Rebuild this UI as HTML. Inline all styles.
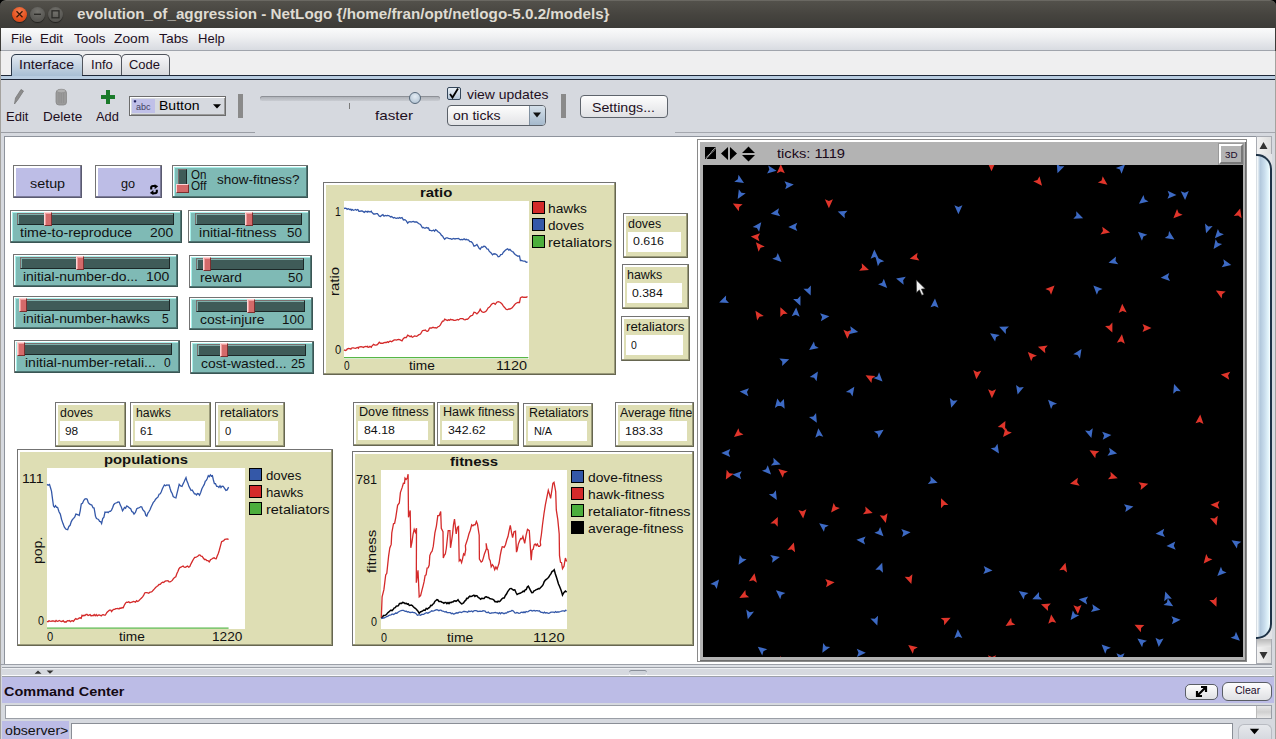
<!DOCTYPE html><html><head><meta charset="utf-8"><style>
*{margin:0;padding:0;box-sizing:border-box}
html,body{width:1276px;height:739px;overflow:hidden;background:#000;font-family:"Liberation Sans",sans-serif;color:#000}
.a{position:absolute}
.t{position:absolute;white-space:nowrap;line-height:1;transform-origin:0 0}
svg{position:absolute;overflow:visible}
</style></head><body>
<div class="a" style="left:0px;top:28px;width:1276px;height:711px;background:#d6d9df"></div>
<div class="a" style="left:0px;top:0px;width:1276px;height:28px;background:linear-gradient(#53514b,#46443f 50%,#3c3b37);border-radius:6px 6px 0 0;border-top:1px solid #6a6862"></div>
<div class="a" style="left:12.0px;top:6.5px;width:15px;height:15px;border-radius:50%;background:radial-gradient(circle at 50% 30%,#f47f52,#e3501d 60%,#c9441a);box-shadow:0 1px 1px rgba(0,0,0,.5)"></div>
<div class="a" style="left:30.0px;top:6.5px;width:15px;height:15px;border-radius:50%;background:radial-gradient(circle at 50% 30%,#73726d,#5a5955 60%,#4e4d49);box-shadow:0 1px 1px rgba(0,0,0,.5)"></div>
<div class="a" style="left:48.0px;top:6.5px;width:15px;height:15px;border-radius:50%;background:radial-gradient(circle at 50% 30%,#73726d,#5a5955 60%,#4e4d49);box-shadow:0 1px 1px rgba(0,0,0,.5)"></div>
<svg style="left:0;top:0" width="70" height="28"><path d="M16.5 11.3 L22.5 17.3 M22.5 11.3 L16.5 17.3" stroke="#3a1a0a" stroke-width="1.3"/><path d="M34 14.3 H41" stroke="#2c2b28" stroke-width="1.4"/><rect x="52" y="10.8" width="7" height="7" fill="none" stroke="#2c2b28" stroke-width="1.3"/></svg>
<div class="t" style="left:76.5px;top:5.90px;font-size:15px;color:#dfdbd2;font-weight:bold;transform:scaleX(1.0142);">evolution_of_aggression - NetLogo {/home/fran/opt/netlogo-5.0.2/models}</div>
<div class="a" style="left:0px;top:28px;width:1276px;height:23px;background:linear-gradient(#fafbfb,#eff0f2 40%,#d8dbe1);border-bottom:1px solid #a0a4ac"></div>
<div class="t" style="left:11px;top:31.80px;font-size:13px;color:#1e0f1e;transform:scaleX(1.0022);">File</div>
<div class="t" style="left:40px;top:31.80px;font-size:13px;color:#1e0f1e;transform:scaleX(1.0265);">Edit</div>
<div class="t" style="left:73.6px;top:31.80px;font-size:13px;color:#1e0f1e;transform:scaleX(1.0343);">Tools</div>
<div class="t" style="left:114.4px;top:31.80px;font-size:13px;color:#1e0f1e;transform:scaleX(1.0561);">Zoom</div>
<div class="t" style="left:159.2px;top:31.80px;font-size:13px;color:#1e0f1e;transform:scaleX(1.0667);">Tabs</div>
<div class="t" style="left:198.2px;top:31.80px;font-size:13px;color:#1e0f1e;transform:scaleX(1.0019);">Help</div>
<div class="a" style="left:0px;top:51px;width:1276px;height:25px;background:#efeff0"></div>
<div class="a" style="left:11px;top:54px;width:72px;height:22px;border:1px solid #2a3848;border-bottom:none;border-radius:5px 5px 0 0;background:linear-gradient(#e3eaf1,#c5d4e2 50%,#a8bfd5)"></div>
<div class="a" style="left:82px;top:54px;width:40px;height:22px;border:1px solid #50545c;border-bottom:none;border-radius:5px 5px 0 0;background:linear-gradient(#f7f7f9,#e6e7ea 50%,#d6d7dc)"></div>
<div class="a" style="left:121px;top:54px;width:49px;height:22px;border:1px solid #50545c;border-bottom:none;border-radius:5px 5px 0 0;background:linear-gradient(#f7f7f9,#e6e7ea 50%,#d6d7dc)"></div>
<div class="t" style="left:19px;top:58.00px;font-size:13px;color:#1e0f1e;transform:scaleX(1.0871);">Interface</div>
<div class="t" style="left:91px;top:58.00px;font-size:13px;color:#1e0f1e;transform:scaleX(1.0052);">Info</div>
<div class="t" style="left:129px;top:58.00px;font-size:13px;color:#1e0f1e;transform:scaleX(0.9970);">Code</div>
<div class="a" style="left:0px;top:75px;width:11px;height:1px;background:#1f2838"></div>
<div class="a" style="left:82px;top:75px;width:1194px;height:1px;background:#1f2838"></div>
<div class="a" style="left:0px;top:76px;width:1276px;height:3px;background:#b8cce0"></div>
<div class="a" style="left:0px;top:79px;width:1276px;height:1px;background:#1f2838"></div>
<div class="a" style="left:0px;top:80px;width:1276px;height:56px;background:#d6d9df"></div>
<div class="a" style="left:0px;top:132px;width:255px;height:1px;background:#9a9da4"></div>
<div class="a" style="left:675px;top:132px;width:601px;height:1px;background:#a4a7ae"></div>
<svg style="left:0;top:80px" width="130" height="30"><path d="M14.5 24 L15.5 18 L21 9.5 L23.5 11 L18 19.5 Z" fill="#8c8c8c" stroke="#7a7a7a" stroke-width="0.8"/><rect x="56" y="10" width="10.5" height="15" rx="3" fill="#9a9a9a" stroke="#888" stroke-width="0.8"/><ellipse cx="61.3" cy="11" rx="4.5" ry="1.8" fill="#b0b0b0" stroke="#8a8a8a" stroke-width="0.6"/><path d="M59 13 V23 M61.3 13 V23 M63.6 13 V23" stroke="#8a8a8a" stroke-width="0.6"/><path d="M101 17 H115 M108 10 V24" stroke="#1a7a2a" stroke-width="4"/></svg>
<div class="t" style="left:5.6px;top:109.90px;font-size:13px;color:#1e0f1e;transform:scaleX(0.9997);">Edit</div>
<div class="t" style="left:42.8px;top:109.90px;font-size:13px;color:#1e0f1e;transform:scaleX(1.0427);">Delete</div>
<div class="t" style="left:96.3px;top:109.90px;font-size:13px;color:#1e0f1e;transform:scaleX(0.9896);">Add</div>
<div class="a" style="left:129px;top:96px;width:97px;height:20px;background:#d6d9df;border:1px solid #6c6c6c;box-shadow:inset 1px 1px 0 #fff,inset -1px -1px 0 #9a9a9a"></div>
<div class="a" style="left:132px;top:99px;width:23px;height:14px;background:#c0c0e8"></div>
<svg style="left:132px;top:99px" width="23" height="14"><path d="M1.5 2 l1.5 -1 l1.5 1 l-1.5 2 z" fill="#1a1a5a"/><text x="4" y="11" font-family="Liberation Sans" font-size="9" fill="#404060">abc</text></svg>
<div class="t" style="left:158.6px;top:98.80px;font-size:13px;color:#000;transform:scaleX(1.0773);">Button</div>
<svg style="left:0;top:0" width="230" height="120"><path d="M213 104.2 H221 L217 108.5 Z" fill="#000"/></svg>
<div class="a" style="left:238px;top:94px;width:5px;height:24px;background:#8a8a8a"></div>
<div class="a" style="left:260px;top:96px;width:180px;height:5px;border-radius:3px;background:linear-gradient(#a9acb2,#c9ccd2);box-shadow:inset 0 1px 0 #8d9096"></div>
<div class="a" style="left:349px;top:103px;width:1px;height:6px;background:#7a7a7a"></div>
<div class="a" style="left:408.5px;top:92px;width:12px;height:12px;border-radius:50%;background:radial-gradient(circle at 50% 35%,#e4ecf4,#a9bccd);border:1px solid #56687a"></div>
<div class="t" style="left:375px;top:109.00px;font-size:13px;color:#1e0f1e;transform:scaleX(1.1687);">faster</div>
<div class="a" style="left:447px;top:87px;width:14px;height:13px;border-radius:2px;border:1px solid #34465a;background:linear-gradient(#eaf0f6,#b4c6d8)"></div>
<svg style="left:447px;top:87px" width="14" height="13"><path d="M3 7 L5.5 10.5 L11 1.5" fill="none" stroke="#000" stroke-width="1.8"/></svg>
<div class="t" style="left:466.8px;top:87.90px;font-size:13px;color:#1e0f1e;transform:scaleX(1.0724);">view updates</div>
<div class="a" style="left:447px;top:105px;width:99px;height:21px;border-radius:4px;border:1px solid #5a6068;background:linear-gradient(#fdfdfd,#e2e3e6)"></div>
<div class="a" style="left:529px;top:106px;width:16px;height:19px;border-left:1px solid #8090a0;border-radius:0 3px 3px 0;background:linear-gradient(#d5e0ea,#a5b9cc)"></div>
<svg style="left:0;top:0" width="560" height="130"><path d="M533 112.5 H541 L537 117.5 Z" fill="#111"/></svg>
<div class="t" style="left:452.7px;top:108.60px;font-size:13px;color:#1e0f1e;transform:scaleX(1.0776);">on ticks</div>
<div class="a" style="left:561px;top:94px;width:5px;height:24px;background:#8a8a8a"></div>
<div class="a" style="left:580px;top:95px;width:88px;height:23px;border-radius:4px;border:1px solid #5e646c;background:linear-gradient(#fdfdfd,#e0e1e4)"></div>
<div class="t" style="left:592px;top:100.50px;font-size:13px;color:#1e0f1e;transform:scaleX(1.0897);">Settings...</div>
<div class="a" style="left:0px;top:28px;width:1px;height:23px;background:#3c3b37"></div>
<div class="a" style="left:0px;top:51px;width:1px;height:688px;background:#a4a29e"></div>
<div class="a" style="left:1275px;top:28px;width:1px;height:23px;background:#3c3b37"></div>
<div class="a" style="left:4px;top:136px;width:1270px;height:529px;background:#fff;border:1px solid #8e939c"></div>
<div class="a" style="left:0px;top:664px;width:1276px;height:1px;background:#9ca0a8"></div>
<div class="a" style="left:2px;top:665px;width:1274px;height:2px;background:#dde0e5"></div>
<div class="a" style="left:2px;top:667px;width:1274px;height:1px;background:#9ca0a8"></div>
<div class="a" style="left:2px;top:668px;width:1274px;height:8px;background:#d6d9df;border-top:1px solid #eef0f3;border-bottom:1px solid #fafbfc"></div>
<div class="a" style="left:629px;top:670px;width:18px;height:4.5px;border-radius:3px;border-top:1.5px solid #8a909a;background:#cfd3da;box-shadow:0 1px 0 #fff"></div>
<svg style="left:0;top:0" width="60" height="680"><path d="M34.6 673.7 L38 670.4 L41.5 673.7 Z M46.6 670.4 H53.5 L50 673.7 Z" fill="#333"/></svg>
<div class="a" style="left:13px;top:165px;width:69px;height:33px;background:#bdbde6;border-top:1px solid #737373;border-left:1px solid #737373;box-shadow:inset -1px -1px 0 #5a5a70,inset -2px -2px 0 #7a7a98,inset 1px 1px 0 #fff,inset 2px 2px 0 #fff"></div>
<div class="t" style="left:29.5px;top:177.00px;font-size:13px;color:#111;transform:scaleX(1.1033);">setup</div>
<div class="a" style="left:95px;top:165px;width:67px;height:33px;background:#bdbde6;border-top:1px solid #737373;border-left:1px solid #737373;box-shadow:inset -1px -1px 0 #5a5a70,inset -2px -2px 0 #7a7a98,inset 1px 1px 0 #fff,inset 2px 2px 0 #fff"></div>
<div class="t" style="left:121px;top:177.00px;font-size:13px;color:#111;transform:scaleX(0.9745);">go</div>
<svg style="left:0;top:0" width="200" height="200"><path d="M151.2 189.6 V187.6 Q151.2 186 153 186 H155.3" fill="none" stroke="#000" stroke-width="2.1"/><path d="M154.6 184.3 L158.2 186.2 L154.6 189.2 Z" fill="#000"/><path d="M156.8 189.8 V191.6 Q156.8 193.2 155 193.2 H152.7" fill="none" stroke="#000" stroke-width="2.1"/><path d="M153.4 194.9 L149.8 193 L153.4 190 Z" fill="#000"/></svg>
<div class="a" style="left:10px;top:210px;width:172px;height:33px;background:#7fbab5;border-top:1px solid #737373;border-left:1px solid #737373;box-shadow:inset -1px -1px 0 #3a5654,inset -2px -2px 0 #4e7472,inset 1px 1px 0 #fff,inset 2px 2px 0 #a8f0ea"></div>
<div class="a" style="left:17px;top:213px;width:157px;height:12px;background:#3f5b58;border-top:1px solid #7a6e6e;border-left:1px solid #7a6e6e;border-bottom:1px solid #1c2828;border-right:1px solid #1c2828;box-shadow:inset 1px 1px 0 #7fb0ab"></div>
<div class="a" style="left:44px;top:212px;width:8px;height:14px;background:#d46a6a;border-top:1px solid #ffd4d4;border-left:1px solid #ffd4d4;border-bottom:1px solid #7a3030;border-right:1px solid #7a3030;box-shadow:inset 1px 1px 0 #f0a0a0"></div>
<div class="t" style="left:20.3px;top:226.00px;font-size:13px;color:#111;transform:scaleX(1.0943);">time-to-reproduce</div>
<div class="t" style="left:150.2px;top:226.00px;font-size:13px;color:#111;transform:scaleX(1.0644);">200</div>
<div class="a" style="left:188px;top:210px;width:122px;height:33px;background:#7fbab5;border-top:1px solid #737373;border-left:1px solid #737373;box-shadow:inset -1px -1px 0 #3a5654,inset -2px -2px 0 #4e7472,inset 1px 1px 0 #fff,inset 2px 2px 0 #a8f0ea"></div>
<div class="a" style="left:195px;top:213px;width:107px;height:12px;background:#3f5b58;border-top:1px solid #7a6e6e;border-left:1px solid #7a6e6e;border-bottom:1px solid #1c2828;border-right:1px solid #1c2828;box-shadow:inset 1px 1px 0 #7fb0ab"></div>
<div class="a" style="left:245px;top:212px;width:8px;height:14px;background:#d46a6a;border-top:1px solid #ffd4d4;border-left:1px solid #ffd4d4;border-bottom:1px solid #7a3030;border-right:1px solid #7a3030;box-shadow:inset 1px 1px 0 #f0a0a0"></div>
<div class="t" style="left:198.6px;top:226.00px;font-size:13px;color:#111;transform:scaleX(1.0832);">initial-fitness</div>
<div class="t" style="left:286.5px;top:226.00px;font-size:13px;color:#111;transform:scaleX(1.0298);">50</div>
<div class="a" style="left:13px;top:254px;width:165px;height:33px;background:#7fbab5;border-top:1px solid #737373;border-left:1px solid #737373;box-shadow:inset -1px -1px 0 #3a5654,inset -2px -2px 0 #4e7472,inset 1px 1px 0 #fff,inset 2px 2px 0 #a8f0ea"></div>
<div class="a" style="left:20px;top:257px;width:150px;height:12px;background:#3f5b58;border-top:1px solid #7a6e6e;border-left:1px solid #7a6e6e;border-bottom:1px solid #1c2828;border-right:1px solid #1c2828;box-shadow:inset 1px 1px 0 #7fb0ab"></div>
<div class="a" style="left:76px;top:256px;width:8px;height:14px;background:#d46a6a;border-top:1px solid #ffd4d4;border-left:1px solid #ffd4d4;border-bottom:1px solid #7a3030;border-right:1px solid #7a3030;box-shadow:inset 1px 1px 0 #f0a0a0"></div>
<div class="t" style="left:23.3px;top:270.00px;font-size:13px;color:#111;transform:scaleX(1.0679);">initial-number-do...</div>
<div class="t" style="left:146px;top:270.00px;font-size:13px;color:#111;transform:scaleX(1.0736);">100</div>
<div class="a" style="left:189px;top:255px;width:123px;height:33px;background:#7fbab5;border-top:1px solid #737373;border-left:1px solid #737373;box-shadow:inset -1px -1px 0 #3a5654,inset -2px -2px 0 #4e7472,inset 1px 1px 0 #fff,inset 2px 2px 0 #a8f0ea"></div>
<div class="a" style="left:196px;top:258px;width:108px;height:12px;background:#3f5b58;border-top:1px solid #7a6e6e;border-left:1px solid #7a6e6e;border-bottom:1px solid #1c2828;border-right:1px solid #1c2828;box-shadow:inset 1px 1px 0 #7fb0ab"></div>
<div class="a" style="left:203px;top:257px;width:8px;height:14px;background:#d46a6a;border-top:1px solid #ffd4d4;border-left:1px solid #ffd4d4;border-bottom:1px solid #7a3030;border-right:1px solid #7a3030;box-shadow:inset 1px 1px 0 #f0a0a0"></div>
<div class="t" style="left:199.5px;top:271.00px;font-size:13px;color:#111;transform:scaleX(1.0566);">reward</div>
<div class="t" style="left:288.4px;top:271.00px;font-size:13px;color:#111;transform:scaleX(1.0229);">50</div>
<div class="a" style="left:13px;top:296px;width:165px;height:33px;background:#7fbab5;border-top:1px solid #737373;border-left:1px solid #737373;box-shadow:inset -1px -1px 0 #3a5654,inset -2px -2px 0 #4e7472,inset 1px 1px 0 #fff,inset 2px 2px 0 #a8f0ea"></div>
<div class="a" style="left:20px;top:299px;width:150px;height:12px;background:#3f5b58;border-top:1px solid #7a6e6e;border-left:1px solid #7a6e6e;border-bottom:1px solid #1c2828;border-right:1px solid #1c2828;box-shadow:inset 1px 1px 0 #7fb0ab"></div>
<div class="a" style="left:19px;top:298px;width:8px;height:14px;background:#d46a6a;border-top:1px solid #ffd4d4;border-left:1px solid #ffd4d4;border-bottom:1px solid #7a3030;border-right:1px solid #7a3030;box-shadow:inset 1px 1px 0 #f0a0a0"></div>
<div class="t" style="left:23.3px;top:312.00px;font-size:13px;color:#111;transform:scaleX(1.0650);">initial-number-hawks</div>
<div class="t" style="left:162.3px;top:312.00px;font-size:13px;color:#111;transform:scaleX(0.9261);">5</div>
<div class="a" style="left:189px;top:297px;width:124px;height:33px;background:#7fbab5;border-top:1px solid #737373;border-left:1px solid #737373;box-shadow:inset -1px -1px 0 #3a5654,inset -2px -2px 0 #4e7472,inset 1px 1px 0 #fff,inset 2px 2px 0 #a8f0ea"></div>
<div class="a" style="left:196px;top:300px;width:109px;height:12px;background:#3f5b58;border-top:1px solid #7a6e6e;border-left:1px solid #7a6e6e;border-bottom:1px solid #1c2828;border-right:1px solid #1c2828;box-shadow:inset 1px 1px 0 #7fb0ab"></div>
<div class="a" style="left:247px;top:299px;width:8px;height:14px;background:#d46a6a;border-top:1px solid #ffd4d4;border-left:1px solid #ffd4d4;border-bottom:1px solid #7a3030;border-right:1px solid #7a3030;box-shadow:inset 1px 1px 0 #f0a0a0"></div>
<div class="t" style="left:199.5px;top:313.00px;font-size:13px;color:#111;transform:scaleX(1.0753);">cost-injure</div>
<div class="t" style="left:281.7px;top:313.00px;font-size:13px;color:#111;transform:scaleX(1.0367);">100</div>
<div class="a" style="left:14px;top:340px;width:166px;height:33px;background:#7fbab5;border-top:1px solid #737373;border-left:1px solid #737373;box-shadow:inset -1px -1px 0 #3a5654,inset -2px -2px 0 #4e7472,inset 1px 1px 0 #fff,inset 2px 2px 0 #a8f0ea"></div>
<div class="a" style="left:17px;top:343px;width:155px;height:12px;background:#3f5b58;border-top:1px solid #7a6e6e;border-left:1px solid #7a6e6e;border-bottom:1px solid #1c2828;border-right:1px solid #1c2828;box-shadow:inset 1px 1px 0 #7fb0ab"></div>
<div class="a" style="left:17px;top:342px;width:8px;height:14px;background:#d46a6a;border-top:1px solid #ffd4d4;border-left:1px solid #ffd4d4;border-bottom:1px solid #7a3030;border-right:1px solid #7a3030;box-shadow:inset 1px 1px 0 #f0a0a0"></div>
<div class="t" style="left:24.5px;top:356.00px;font-size:13px;color:#111;transform:scaleX(1.0766);">initial-number-retali...</div>
<div class="t" style="left:164.4px;top:356.00px;font-size:13px;color:#111;transform:scaleX(0.9261);">0</div>
<div class="a" style="left:190px;top:341px;width:124px;height:33px;background:#7fbab5;border-top:1px solid #737373;border-left:1px solid #737373;box-shadow:inset -1px -1px 0 #3a5654,inset -2px -2px 0 #4e7472,inset 1px 1px 0 #fff,inset 2px 2px 0 #a8f0ea"></div>
<div class="a" style="left:197px;top:344px;width:109px;height:12px;background:#3f5b58;border-top:1px solid #7a6e6e;border-left:1px solid #7a6e6e;border-bottom:1px solid #1c2828;border-right:1px solid #1c2828;box-shadow:inset 1px 1px 0 #7fb0ab"></div>
<div class="a" style="left:220px;top:343px;width:8px;height:14px;background:#d46a6a;border-top:1px solid #ffd4d4;border-left:1px solid #ffd4d4;border-bottom:1px solid #7a3030;border-right:1px solid #7a3030;box-shadow:inset 1px 1px 0 #f0a0a0"></div>
<div class="t" style="left:200.8px;top:357.00px;font-size:13px;color:#111;transform:scaleX(1.0673);">cost-wasted...</div>
<div class="t" style="left:290.8px;top:357.00px;font-size:13px;color:#111;transform:scaleX(0.9814);">25</div>
<div class="a" style="left:172px;top:165px;width:136px;height:33px;background:#7fbab5;border-top:1px solid #737373;border-left:1px solid #737373;box-shadow:inset -1px -1px 0 #3a5654,inset -2px -2px 0 #4e7472,inset 1px 1px 0 #fff,inset 2px 2px 0 #a8f0ea"></div>
<div class="a" style="left:178px;top:169px;width:9px;height:23px;background:#3f5b58;border-top:1px solid #7a6e6e;border-left:1px solid #7a6e6e;border-bottom:1px solid #1c2828;border-right:1px solid #1c2828"></div>
<div class="a" style="left:176px;top:184px;width:13px;height:9px;background:#d46a6a;border-top:1px solid #ffd4d4;border-left:1px solid #ffd4d4;border-bottom:1px solid #7a3030;border-right:1px solid #7a3030"></div>
<div class="t" style="left:190.9px;top:168.54px;font-size:12px;color:#111;transform:scaleX(0.9625);">On</div>
<div class="t" style="left:190.9px;top:180.34px;font-size:12px;color:#111;transform:scaleX(0.9768);">Off</div>
<div class="t" style="left:216.6px;top:172.70px;font-size:13px;color:#111;transform:scaleX(1.0377);">show-fitness?</div>
<div class="a" style="left:623px;top:213px;width:65px;height:45px;background:#dedeb4;border-top:1px solid #737373;border-left:1px solid #737373;box-shadow:inset -1px -1px 0 #666650,inset -2px -2px 0 #9b9b7a,inset 1px 1px 0 #fff,inset 2px 2px 0 #fff"></div>
<div class="a" style="left:628px;top:232px;width:53px;height:19.5px;background:#fff"></div>
<div class="t" style="left:628.4px;top:217.54px;font-size:12px;color:#111;transform:scaleX(1.0339);">doves</div>
<div class="t" style="left:633.4px;top:236.13px;font-size:11.3px;color:#111;transform:scaleX(1.0967);">0.616</div>
<div class="a" style="left:622px;top:264px;width:67px;height:45px;background:#dedeb4;border-top:1px solid #737373;border-left:1px solid #737373;box-shadow:inset -1px -1px 0 #666650,inset -2px -2px 0 #9b9b7a,inset 1px 1px 0 #fff,inset 2px 2px 0 #fff"></div>
<div class="a" style="left:627px;top:283px;width:55px;height:19.5px;background:#fff"></div>
<div class="t" style="left:627px;top:269.34px;font-size:12px;color:#111;transform:scaleX(1.0348);">hawks</div>
<div class="t" style="left:632.3px;top:287.63px;font-size:11.3px;color:#111;transform:scaleX(1.0861);">0.384</div>
<div class="a" style="left:621px;top:316px;width:69px;height:45px;background:#dedeb4;border-top:1px solid #737373;border-left:1px solid #737373;box-shadow:inset -1px -1px 0 #666650,inset -2px -2px 0 #9b9b7a,inset 1px 1px 0 #fff,inset 2px 2px 0 #fff"></div>
<div class="a" style="left:626px;top:335px;width:57px;height:19.5px;background:#fff"></div>
<div class="t" style="left:626.3px;top:321.24px;font-size:12px;color:#111;transform:scaleX(1.1084);">retaliators</div>
<div class="t" style="left:631.2px;top:339.63px;font-size:11.3px;color:#111;transform:scaleX(0.9234);">0</div>
<div class="a" style="left:55px;top:402px;width:71px;height:45px;background:#dedeb4;border-top:1px solid #737373;border-left:1px solid #737373;box-shadow:inset -1px -1px 0 #666650,inset -2px -2px 0 #9b9b7a,inset 1px 1px 0 #fff,inset 2px 2px 0 #fff"></div>
<div class="a" style="left:60px;top:421px;width:59px;height:20px;background:#fff"></div>
<div class="t" style="left:60.3px;top:406.54px;font-size:12px;color:#111;transform:scaleX(1.0307);">doves</div>
<div class="t" style="left:65.4px;top:425.93px;font-size:11.3px;color:#111;transform:scaleX(1.0507);">98</div>
<div class="a" style="left:130px;top:402px;width:81px;height:45px;background:#dedeb4;border-top:1px solid #737373;border-left:1px solid #737373;box-shadow:inset -1px -1px 0 #666650,inset -2px -2px 0 #9b9b7a,inset 1px 1px 0 #fff,inset 2px 2px 0 #fff"></div>
<div class="a" style="left:135px;top:421px;width:70px;height:20px;background:#fff"></div>
<div class="t" style="left:135.6px;top:406.54px;font-size:12px;color:#111;transform:scaleX(1.0231);">hawks</div>
<div class="t" style="left:140.3px;top:425.93px;font-size:11.3px;color:#111;transform:scaleX(1.0189);">61</div>
<div class="a" style="left:215px;top:402px;width:70px;height:45px;background:#dedeb4;border-top:1px solid #737373;border-left:1px solid #737373;box-shadow:inset -1px -1px 0 #666650,inset -2px -2px 0 #9b9b7a,inset 1px 1px 0 #fff,inset 2px 2px 0 #fff"></div>
<div class="a" style="left:220px;top:421px;width:58px;height:20px;background:#fff"></div>
<div class="t" style="left:220.2px;top:406.54px;font-size:12px;color:#111;transform:scaleX(1.1065);">retaliators</div>
<div class="t" style="left:225.3px;top:425.93px;font-size:11.3px;color:#111;transform:scaleX(0.9871);">0</div>
<div class="a" style="left:353px;top:402px;width:82px;height:44px;background:#dedeb4;border-top:1px solid #737373;border-left:1px solid #737373;box-shadow:inset -1px -1px 0 #666650,inset -2px -2px 0 #9b9b7a,inset 1px 1px 0 #fff,inset 2px 2px 0 #fff"></div>
<div class="a" style="left:358px;top:420.5px;width:70px;height:19.5px;background:#fff"></div>
<div class="t" style="left:358.8px;top:406.34px;font-size:12px;color:#111;transform:scaleX(1.0528);">Dove fitness</div>
<div class="t" style="left:363.7px;top:424.93px;font-size:11.3px;color:#111;transform:scaleX(1.0932);">84.18</div>
<div class="a" style="left:437px;top:402px;width:82px;height:44px;background:#dedeb4;border-top:1px solid #737373;border-left:1px solid #737373;box-shadow:inset -1px -1px 0 #666650,inset -2px -2px 0 #9b9b7a,inset 1px 1px 0 #fff,inset 2px 2px 0 #fff"></div>
<div class="a" style="left:442px;top:420.5px;width:71px;height:19.5px;background:#fff"></div>
<div class="t" style="left:442.6px;top:406.34px;font-size:12px;color:#111;transform:scaleX(1.0512);">Hawk fitness</div>
<div class="t" style="left:447.9px;top:424.93px;font-size:11.3px;color:#111;transform:scaleX(1.0884);">342.62</div>
<div class="a" style="left:523px;top:403px;width:70px;height:44px;background:#dedeb4;border-top:1px solid #737373;border-left:1px solid #737373;box-shadow:inset -1px -1px 0 #666650,inset -2px -2px 0 #9b9b7a,inset 1px 1px 0 #fff,inset 2px 2px 0 #fff"></div>
<div class="a" style="left:528px;top:421px;width:59px;height:20px;background:#fff"></div>
<div class="t" style="left:528.6px;top:407.24px;font-size:12px;color:#111;transform:scaleX(1.0356);">Retaliators</div>
<div class="t" style="left:533.7px;top:426.03px;font-size:11.3px;color:#111;transform:scaleX(0.9613);">N/A</div>
<div class="a" style="left:615px;top:402px;width:79px;height:45px;background:#dedeb4;border-top:1px solid #737373;border-left:1px solid #737373;box-shadow:inset -1px -1px 0 #666650,inset -2px -2px 0 #9b9b7a,inset 1px 1px 0 #fff,inset 2px 2px 0 #fff"></div>
<div class="a" style="left:620px;top:421px;width:67px;height:20px;background:#fff"></div>
<div class="a" style="left:618px;top:404px;width:74px;height:16px;overflow:hidden">
<div class="t" style="left:2px;top:3.44px;font-size:12px;color:#111;transform:scaleX(1.0246);">Average fitness</div>
</div>
<div class="t" style="left:625.4px;top:426.03px;font-size:11.3px;color:#111;transform:scaleX(1.1000);">183.33</div>
<div class="a" style="left:323px;top:182px;width:293px;height:193px;background:#dedeb4;border-top:1px solid #737373;border-left:1px solid #737373;box-shadow:inset -1px -1px 0 #666650,inset -2px -2px 0 #9b9b7a,inset 1px 1px 0 #fff,inset 2px 2px 0 #fff"></div>
<div class="a" style="left:344px;top:201px;width:184.5px;height:157.5px;background:#fff"></div>
<div class="t" style="left:419.7px;top:185.57px;font-size:13.5px;color:#111;font-weight:bold;transform:scaleX(1.1037);">ratio</div>
<div class="t" style="left:334.5px;top:205.00px;font-size:13px;color:#111;transform:scaleX(0.8017);">1</div>
<div class="t" style="left:335px;top:343.30px;font-size:13px;color:#111;transform:scaleX(0.8570);">0</div>
<div class="t" style="left:344.1px;top:359.20px;font-size:13px;color:#111;transform:scaleX(0.7741);">0</div>
<div class="t" style="left:409.1px;top:359.20px;font-size:13px;color:#111;transform:scaleX(1.0545);">time</div>
<div class="t" style="left:496px;top:359.20px;font-size:13px;color:#111;transform:scaleX(1.1084);">1120</div>
<div class="t" style="left:328.3px;top:296px;font-size:13px;color:#111;transform:rotate(-90deg) scaleX(1.15);transform-origin:0 0">ratio</div>
<div class="a" style="left:532px;top:201px;width:13px;height:13px;background:#d42a2a;border:1px solid #000"></div>
<div class="t" style="left:548px;top:202.14px;font-size:13.3px;color:#111;transform:scaleX(1.0344);">hawks</div>
<div class="a" style="left:532px;top:218px;width:13px;height:13px;background:#3458a8;border:1px solid #000"></div>
<div class="t" style="left:548px;top:219.14px;font-size:13.3px;color:#111;transform:scaleX(1.0145);">doves</div>
<div class="a" style="left:532px;top:235px;width:13px;height:13px;background:#4cae3c;border:1px solid #000"></div>
<div class="t" style="left:548px;top:236.14px;font-size:13.3px;color:#111;transform:scaleX(1.0969);">retaliators</div>
<svg style="left:0;top:0" width="1276" height="739"><polyline points="344.0,208.5 345.3,208.2 346.6,208.5 347.1,209.3 348.4,208.7 349.6,209.5 350.9,209.3 351.4,210.2 352.4,209.5 353.4,210.3 354.4,210.0 355.5,209.5 356.5,210.2 357.5,209.5 358.5,210.2 358.9,211.4 360.0,211.4 361.0,210.9 362.1,211.0 363.2,211.6 364.3,212.4 365.4,211.3 366.4,211.6 367.5,212.1 367.5,211.4 368.8,211.5 370.0,212.0 371.3,211.2 371.7,212.1 373.6,214.0 374.9,214.0 376.1,213.6 377.4,213.7 379.3,216.1 380.5,216.5 381.7,215.3 382.9,214.7 384.0,216.2 385.2,215.4 386.4,215.9 387.4,215.5 388.5,215.6 389.5,216.0 390.6,217.0 391.6,216.6 393.5,218.0 394.5,217.5 395.5,218.2 396.5,218.3 397.6,217.9 398.6,218.2 399.6,217.5 400.6,218.2 402.0,217.5 403.4,219.9 404.9,219.6 406.3,220.8 407.7,223.2 408.9,221.9 410.1,221.6 411.2,222.0 412.3,221.6 413.4,221.5 414.5,222.0 415.6,221.9 416.7,222.0 418.6,223.5 420.5,224.4 422.4,227.7 423.4,227.4 424.4,228.2 425.4,228.1 426.5,227.4 427.5,228.0 428.5,227.9 429.5,230.3 430.5,230.3 431.5,230.9 432.5,230.7 433.6,230.0 434.6,231.1 435.6,229.7 436.6,230.3 438.0,231.7 439.2,232.5 440.4,233.6 441.5,235.4 442.5,235.9 443.6,237.9 444.7,239.3 446.1,237.9 447.5,237.9 448.5,238.3 449.6,238.7 450.6,238.6 451.7,239.2 452.7,238.8 453.8,238.4 455.0,239.0 456.1,238.7 457.3,238.6 458.4,238.4 460.3,239.8 461.6,239.4 462.8,239.7 464.1,238.8 465.2,239.8 466.2,239.3 467.3,239.8 468.4,239.8 469.8,241.7 471.2,241.7 472.6,243.1 474.0,246.2 475.4,245.7 476.9,244.5 478.0,246.3 479.1,248.4 480.2,249.2 481.6,246.9 482.7,247.2 483.8,246.2 484.9,246.4 486.0,247.4 487.0,249.0 488.1,249.2 489.2,251.1 490.3,252.3 491.4,253.1 492.5,254.9 493.9,253.8 495.3,254.0 496.8,254.7 498.2,256.8 499.5,256.5 500.7,254.7 502.0,254.5 503.4,252.2 504.8,250.7 506.2,249.6 507.7,248.8 508.8,250.1 509.9,249.4 511.1,250.7 512.2,251.5 513.3,252.1 514.4,253.8 515.5,254.8 516.6,255.4 518.0,256.2 519.5,255.9 520.4,260.6 521.5,260.4 522.7,260.8 523.8,261.1 525.0,261.2 526.3,262.3 527.5,262.0" fill="none" stroke="#3458a8" stroke-width="1.3" stroke-linejoin="miter"/></svg>
<svg style="left:0;top:0" width="1276" height="739"><polyline points="344.0,349.9 345.3,350.6 346.6,349.9 347.1,349.1 348.4,348.5 349.6,348.6 350.9,349.1 351.4,348.2 352.4,347.8 353.4,347.8 354.4,348.2 355.5,348.3 356.5,347.8 357.5,347.4 358.5,348.2 358.9,347.0 360.0,346.8 361.0,346.6 362.1,346.8 363.2,347.4 364.3,346.9 365.4,346.5 366.4,346.6 367.5,346.3 367.5,347.0 368.8,347.3 370.0,346.4 371.3,347.2 371.7,346.3 373.6,344.4 374.9,345.1 376.1,345.0 377.4,344.7 379.3,342.3 380.5,343.3 381.7,343.1 382.9,343.4 384.0,342.6 385.2,342.5 386.4,342.5 387.4,341.7 388.5,342.4 389.5,341.4 390.6,341.2 391.6,341.8 393.5,340.4 394.5,339.9 395.5,339.8 396.5,340.1 397.6,339.6 398.6,339.5 399.6,339.7 400.6,340.2 402.0,340.9 403.4,338.5 404.9,337.4 406.3,337.6 407.7,335.2 408.9,335.8 410.1,336.8 411.2,336.0 412.3,337.3 413.4,336.8 414.5,336.0 415.6,336.1 416.7,336.4 418.6,334.9 420.5,334.0 422.4,330.7 423.4,330.4 424.4,330.4 425.4,330.0 426.5,331.1 427.5,331.3 428.5,330.5 429.5,328.1 430.5,328.0 431.5,328.1 432.5,327.4 433.6,327.5 434.6,327.8 435.6,327.7 436.6,328.1 438.0,326.7 439.2,326.3 440.4,324.8 441.5,322.8 442.5,321.2 443.6,321.2 444.7,319.1 446.1,319.8 447.5,320.5 448.5,319.8 449.6,320.2 450.6,319.2 451.7,319.8 452.7,319.6 453.8,320.4 455.0,320.3 456.1,320.2 457.3,319.5 458.4,320.0 460.3,318.6 461.6,318.7 462.8,318.7 464.1,319.6 465.2,319.8 466.2,319.2 467.3,319.3 468.4,318.6 469.8,316.7 471.2,315.7 472.6,315.3 474.0,312.2 475.4,312.6 476.9,313.9 478.0,312.8 479.1,311.5 480.2,309.2 481.6,311.5 482.7,312.2 483.8,312.3 484.9,312.0 486.0,311.3 487.0,310.0 488.1,308.0 489.2,307.3 490.3,306.1 491.4,304.5 492.5,303.5 493.9,303.2 495.3,304.4 496.8,302.2 498.2,301.6 499.5,302.0 500.7,302.7 502.0,303.9 503.4,306.1 504.8,307.7 506.2,309.4 507.7,309.6 508.8,308.9 509.9,309.0 511.1,308.4 512.2,307.7 513.3,306.3 514.4,305.0 515.5,303.7 516.6,303.0 518.0,302.3 519.5,302.5 520.4,297.8 521.5,297.1 522.7,297.0 523.8,297.3 525.0,297.2 526.3,297.3 527.5,296.4" fill="none" stroke="#d42a2a" stroke-width="1.3" stroke-linejoin="miter"/></svg>
<svg style="left:0;top:0" width="1276" height="739"><polyline points="344.0,357.6 528.3,357.6" fill="none" stroke="#58b646" stroke-width="1.2" stroke-linejoin="miter"/></svg>
<div class="a" style="left:17px;top:449px;width:316px;height:197px;background:#dedeb4;border-top:1px solid #737373;border-left:1px solid #737373;box-shadow:inset -1px -1px 0 #666650,inset -2px -2px 0 #9b9b7a,inset 1px 1px 0 #fff,inset 2px 2px 0 #fff"></div>
<div class="a" style="left:47px;top:468px;width:198px;height:161px;background:#fff"></div>
<div class="t" style="left:104.1px;top:452.57px;font-size:13.5px;color:#111;font-weight:bold;transform:scaleX(1.0989);">populations</div>
<div class="t" style="left:21.7px;top:471.60px;font-size:13px;color:#111;transform:scaleX(1.0877);">111</div>
<div class="t" style="left:37.6px;top:614.30px;font-size:13px;color:#111;transform:scaleX(0.8294);">0</div>
<div class="t" style="left:47px;top:630.20px;font-size:13px;color:#111;transform:scaleX(0.8570);">0</div>
<div class="t" style="left:119.3px;top:630.20px;font-size:13px;color:#111;transform:scaleX(1.0545);">time</div>
<div class="t" style="left:211.5px;top:630.20px;font-size:13px;color:#111;transform:scaleX(1.0505);">1220</div>
<div class="t" style="left:30.8px;top:563.8px;font-size:13px;color:#111;transform:rotate(-90deg) scaleX(1.08);transform-origin:0 0">pop.</div>
<div class="a" style="left:249px;top:468px;width:13px;height:13px;background:#3458a8;border:1px solid #000"></div>
<div class="t" style="left:265.8px;top:469.14px;font-size:13.3px;color:#111;transform:scaleX(0.9948);">doves</div>
<div class="a" style="left:249px;top:485px;width:13px;height:13px;background:#d42a2a;border:1px solid #000"></div>
<div class="t" style="left:265.8px;top:486.14px;font-size:13.3px;color:#111;transform:scaleX(0.9893);">hawks</div>
<div class="a" style="left:249px;top:502px;width:13px;height:13px;background:#4cae3c;border:1px solid #000"></div>
<div class="t" style="left:265.8px;top:503.14px;font-size:13.3px;color:#111;transform:scaleX(1.0884);">retaliators</div>
<svg style="left:0;top:0" width="1276" height="739"><polyline points="47.0,484.4 48.2,485.2 49.5,484.4 50.5,487.7 51.5,491.1 52.5,498.9 53.5,506.0 54.5,507.1 55.5,505.7 56.6,507.4 57.6,507.4 59.0,511.7 60.3,514.1 61.6,519.5 63.0,523.6 64.3,526.9 65.7,529.0 66.7,529.3 67.7,529.7 68.9,526.4 70.1,525.3 71.3,521.6 72.5,519.5 73.6,518.4 74.8,517.0 75.9,514.1 77.0,514.3 78.1,514.8 79.2,515.5 80.2,510.8 81.3,504.0 82.5,503.2 83.7,500.5 84.8,499.1 86.0,498.6 87.2,499.3 88.3,502.6 89.5,503.9 90.7,504.7 91.8,505.0 93.0,507.7 94.1,508.0 95.5,516.2 96.5,518.6 97.5,519.0 98.5,519.5 99.6,521.3 100.6,521.5 101.6,523.6 102.7,518.6 103.9,517.1 105.0,512.1 106.1,512.3 107.2,511.9 108.2,512.7 109.3,511.4 110.4,511.4 111.5,510.1 112.6,507.7 113.7,504.7 114.8,503.5 115.9,503.0 117.0,502.6 118.1,501.9 119.2,502.0 120.3,505.1 121.4,507.2 122.5,510.7 123.5,509.3 124.5,507.5 125.6,508.2 126.6,506.0 127.6,506.3 128.6,507.2 129.7,508.2 130.7,508.7 131.8,511.5 132.9,512.1 134.0,514.1 135.4,512.4 136.8,508.7 137.8,508.2 138.8,507.8 139.8,507.3 140.8,506.7 141.8,507.1 142.8,509.7 143.8,510.7 144.8,511.8 145.8,515.3 146.8,516.2 147.9,513.1 149.0,511.5 150.0,509.8 151.1,507.1 152.2,504.7 153.3,502.4 154.5,501.1 155.6,499.2 156.8,498.0 157.9,497.2 159.1,494.2 160.3,493.8 161.3,491.7 162.4,488.8 163.4,486.7 164.4,485.0 165.6,485.7 166.8,485.0 167.9,485.1 169.1,485.0 170.1,488.5 171.1,491.7 172.2,493.5 173.2,496.5 174.6,497.5 175.9,497.9 177.0,493.4 178.1,488.9 179.2,484.4 180.6,485.9 182.0,486.4 183.0,484.1 184.0,482.1 185.0,479.7 186.0,477.6 187.0,481.4 188.0,483.5 189.0,486.6 190.0,488.4 191.1,490.5 192.2,490.0 193.3,491.8 194.4,493.8 195.5,493.8 196.5,495.0 197.5,493.6 198.5,493.9 199.5,495.2 200.7,492.4 201.9,488.8 203.1,486.5 204.3,484.4 205.3,481.2 206.3,480.4 207.3,478.5 208.3,475.6 209.3,476.6 210.4,474.8 211.4,476.1 212.4,475.6 213.4,480.0 214.4,483.7 215.5,483.7 216.7,486.4 217.8,486.4 218.9,487.5 220.0,485.7 221.0,487.5 222.1,486.2 223.2,486.4 224.6,488.4 225.9,490.4 227.2,489.9 228.6,487.1" fill="none" stroke="#3458a8" stroke-width="1.3" stroke-linejoin="miter"/></svg>
<svg style="left:0;top:0" width="1276" height="739"><polyline points="47.0,621.3 48.0,621.8 49.0,620.8 50.0,621.2 51.1,621.3 52.1,621.0 53.1,620.8 54.1,621.0 55.1,621.7 56.1,620.5 57.2,621.4 58.2,621.2 59.2,620.5 60.2,621.0 61.2,621.5 62.2,621.3 63.2,620.6 64.3,622.1 65.3,621.8 66.3,622.1 67.3,620.7 68.3,620.9 69.3,620.6 70.4,621.7 71.4,620.9 72.4,620.7 73.4,621.3 74.6,619.8 75.8,618.6 76.9,619.2 78.0,619.0 79.0,618.0 80.1,617.8 81.2,618.3 82.0,615.2 83.0,615.9 84.0,615.3 85.0,615.5 86.1,614.5 87.1,614.5 88.1,615.5 89.1,615.1 90.1,614.5 91.1,615.9 92.1,615.4 93.1,615.7 94.2,614.5 95.2,615.8 96.2,614.5 97.2,615.8 98.2,615.1 99.2,614.9 100.2,615.3 101.2,615.9 102.3,614.8 103.3,614.6 104.3,615.2 105.3,615.2 106.9,612.4 108.2,611.2 109.5,610.2 110.8,610.1 111.5,611.6 112.6,610.3 113.6,609.3 114.7,609.3 115.8,608.6 116.8,608.6 117.9,608.4 119.0,609.0 120.0,608.0 121.1,608.2 122.1,607.5 123.2,607.8 124.3,605.2 125.5,603.1 126.6,602.2 127.7,602.4 128.8,601.8 129.9,602.8 131.0,602.3 132.1,602.2 133.2,601.4 134.3,601.6 135.5,602.1 136.6,600.6 137.7,601.5 138.8,600.8 140.1,599.4 141.3,598.2 142.6,596.9 143.6,595.5 144.7,593.0 145.7,592.7 146.8,592.7 147.8,592.9 148.8,593.2 149.9,592.1 150.9,592.2 152.1,591.6 153.2,590.2 154.4,588.9 155.6,587.5 156.8,586.6 157.9,585.7 159.0,584.5 160.2,584.4 161.4,583.0 162.6,582.2 163.7,582.5 164.9,581.3 165.9,580.9 167.0,580.8 168.0,580.6 169.0,581.8 170.1,581.9 171.1,581.3 172.3,580.4 173.4,578.7 174.6,577.4 175.8,576.7 176.8,573.8 177.9,571.4 178.9,568.9 179.9,567.6 181.0,567.2 182.0,566.5 183.1,566.1 184.2,567.2 185.3,567.3 186.5,566.6 187.6,566.1 188.7,567.2 189.8,566.5 191.1,563.6 192.4,561.1 193.7,558.8 194.7,557.4 195.8,557.3 196.8,556.8 197.8,556.2 198.9,555.1 199.9,554.9 201.1,556.1 202.2,556.4 203.3,558.0 204.5,559.5 205.7,559.4 206.8,560.5 208.0,560.6 209.2,561.9 210.5,559.8 211.8,559.0 213.1,558.0 214.1,557.8 215.2,558.7 216.2,558.8 217.2,556.0 218.3,553.5 219.3,550.2 220.4,546.2 221.6,541.7 222.7,541.2 223.7,540.7 224.8,539.3 226.1,539.1 227.3,539.0 228.6,539.3" fill="none" stroke="#d42a2a" stroke-width="1.3" stroke-linejoin="miter"/></svg>
<svg style="left:0;top:0" width="1276" height="739"><polyline points="47.0,628.2 228.6,628.2" fill="none" stroke="#58b646" stroke-width="1.2" stroke-linejoin="miter"/></svg>
<div class="a" style="left:352px;top:451px;width:342px;height:195px;background:#dedeb4;border-top:1px solid #737373;border-left:1px solid #737373;box-shadow:inset -1px -1px 0 #666650,inset -2px -2px 0 #9b9b7a,inset 1px 1px 0 #fff,inset 2px 2px 0 #fff"></div>
<div class="a" style="left:381px;top:470px;width:186px;height:159px;background:#fff"></div>
<div class="t" style="left:450.2px;top:454.97px;font-size:13.5px;color:#111;font-weight:bold;transform:scaleX(1.1069);">fitness</div>
<div class="t" style="left:356px;top:473.20px;font-size:13px;color:#111;transform:scaleX(0.9722);">781</div>
<div class="t" style="left:370.6px;top:614.60px;font-size:13px;color:#111;transform:scaleX(0.8294);">0</div>
<div class="t" style="left:380.8px;top:631.00px;font-size:13px;color:#111;transform:scaleX(0.8294);">0</div>
<div class="t" style="left:447.3px;top:631.00px;font-size:13px;color:#111;transform:scaleX(1.0707);">time</div>
<div class="t" style="left:533.1px;top:631.00px;font-size:13px;color:#111;transform:scaleX(1.1370);">1120</div>
<div class="t" style="left:365.4px;top:572.9px;font-size:13px;color:#111;transform:rotate(-90deg) scaleX(1.15);transform-origin:0 0">fitness</div>
<div class="a" style="left:571px;top:470px;width:13px;height:13px;background:#3458a8;border:1px solid #000"></div>
<div class="t" style="left:587.7px;top:471.14px;font-size:13.3px;color:#111;transform:scaleX(1.0395);">dove-fitness</div>
<div class="a" style="left:571px;top:487px;width:13px;height:13px;background:#d42a2a;border:1px solid #000"></div>
<div class="t" style="left:587.7px;top:488.14px;font-size:13.3px;color:#111;transform:scaleX(1.0353);">hawk-fitness</div>
<div class="a" style="left:571px;top:504px;width:13px;height:13px;background:#4cae3c;border:1px solid #000"></div>
<div class="t" style="left:587.7px;top:505.14px;font-size:13.3px;color:#111;transform:scaleX(1.0843);">retaliator-fitness</div>
<div class="a" style="left:571px;top:521px;width:13px;height:13px;background:#000;border:1px solid #000"></div>
<div class="t" style="left:587.7px;top:522.14px;font-size:13.3px;color:#111;transform:scaleX(1.0498);">average-fitness</div>
<svg style="left:0;top:0" width="1276" height="739"><polyline points="381.3,618.0 382.1,596.8 383.9,589.7 385.7,575.0 386.8,573.3 388.6,556.2 389.8,548.0 391.2,544.4 391.8,532.9 393.5,523.7 394.6,523.4 395.8,517.3 397.6,505.3 399.3,503.0 400.4,492.6 402.2,487.4 403.4,483.3 404.5,483.4 405.0,478.2 406.1,479.5 407.3,478.2 408.1,474.2 408.5,517.3 410.2,510.4 410.8,547.8 412.0,541.8 413.1,534.0 414.2,529.4 415.4,532.2 416.5,528.3 416.3,582.7 418.0,570.3 419.2,596.8 420.6,595.6 422.1,589.7 423.1,585.8 424.1,581.7 425.1,575.6 426.1,574.8 427.1,568.1 428.2,567.8 429.2,565.0 429.8,555.6 431.0,552.5 432.1,551.3 433.3,546.2 434.9,532.9 436.4,526.1 437.8,515.6 439.2,515.6 440.7,511.6 441.3,528.3 443.0,531.7 443.3,558.0 444.3,555.3 445.3,554.0 446.3,548.5 448.2,530.6 449.9,530.6 450.5,547.8 451.5,541.7 452.5,534.6 453.5,524.6 454.5,519.0 456.2,534.0 457.4,527.4 458.5,526.5 459.2,560.9 460.4,559.6 461.6,562.7 462.6,558.6 463.6,553.8 464.7,555.0 465.7,549.7 465.4,545.5 466.6,542.0 467.7,538.6 468.9,534.0 470.3,530.2 471.7,524.8 472.9,525.9 474.0,524.7 475.2,524.8 476.4,521.6 477.5,524.3 479.2,535.2 479.4,559.1 481.2,562.1 482.3,561.2 483.3,558.1 484.4,554.0 485.4,551.4 486.5,548.5 486.1,543.3 487.1,549.0 488.1,550.1 489.2,558.8 490.2,560.6 491.2,566.8 492.4,564.7 493.6,566.3 494.7,569.6 495.9,566.9 497.1,569.1 498.1,566.1 499.1,563.0 500.2,555.6 501.2,550.5 502.2,546.7 503.2,546.9 504.2,547.4 505.5,544.7 506.8,539.8 508.0,536.6 509.1,530.9 510.3,525.4 511.5,532.3 512.6,537.5 514.0,531.8 515.5,531.2 516.5,552.1 517.2,550.0 518.3,544.1 519.5,540.9 520.6,538.6 521.8,538.9 522.9,536.3 524.7,543.3 526.1,535.2 527.5,529.4 529.3,530.6 531.2,560.3 532.1,550.0 533.1,549.3 534.2,544.8 535.2,544.0 536.2,545.5 537.3,544.0 538.5,546.3 539.6,546.3 540.7,545.0 540.2,542.1 541.4,534.5 542.5,524.8 544.0,513.5 545.4,504.7 546.8,497.6 548.3,490.3 549.5,494.1 550.6,498.4 551.8,490.7 552.9,483.4 554.0,482.3 555.7,491.5 556.3,509.9 557.8,519.7 559.2,534.0 559.5,555.6 560.5,562.3 561.5,562.5 562.5,568.6 564.0,566.2 565.4,558.0 566.6,561.5" fill="none" stroke="#d42a2a" stroke-width="1.3" stroke-linejoin="miter"/></svg>
<svg style="left:0;top:0" width="1276" height="739"><polyline points="381.3,618.0 382.3,617.9 383.4,615.5 384.4,615.4 385.5,615.1 386.5,614.5 387.6,612.9 388.6,612.1 389.8,611.0 391.0,610.2 392.1,610.6 393.3,609.2 394.3,607.9 395.3,607.6 396.3,606.1 397.4,605.9 398.4,605.7 399.4,603.6 400.4,603.3 401.5,603.4 402.7,602.4 403.9,602.7 405.1,603.6 406.3,603.3 407.3,604.1 408.3,603.9 409.3,605.4 410.3,605.3 411.3,605.0 412.3,605.5 413.3,606.8 414.3,607.6 415.3,608.3 416.3,609.2 417.8,610.9 419.2,613.3 420.4,611.9 421.5,611.5 422.7,610.9 423.9,610.0 425.1,610.3 426.2,608.4 427.4,609.0 428.6,608.0 429.6,607.5 430.7,605.3 431.7,605.6 432.8,604.2 433.8,603.5 434.8,601.4 435.9,600.5 436.9,599.7 437.9,600.0 438.9,601.5 439.9,601.4 440.9,601.5 441.9,602.2 442.9,602.4 443.9,603.3 444.9,602.5 445.9,602.5 446.9,603.6 448.0,602.6 449.0,603.6 450.0,602.4 451.0,602.7 452.0,601.9 453.0,601.9 454.0,600.9 455.0,600.8 456.0,601.3 457.0,600.7 458.0,599.7 459.2,601.6 460.4,602.7 461.6,603.9 462.6,603.6 463.7,602.7 464.7,601.1 465.7,600.4 466.7,598.4 467.8,598.5 468.8,597.1 469.8,596.2 470.8,596.5 471.8,596.2 472.9,595.6 473.9,595.1 474.9,596.4 475.9,595.6 477.1,595.9 478.2,597.4 479.4,598.0 480.6,599.2 481.8,598.4 483.0,598.6 484.1,598.5 485.3,596.9 486.5,596.8 487.6,597.6 488.6,597.5 489.7,598.5 490.7,598.8 491.8,598.9 492.9,599.4 493.9,600.0 495.0,601.7 496.0,601.6 497.1,602.1 498.1,601.1 499.1,601.6 500.1,601.1 501.2,599.7 502.2,598.6 503.2,598.1 504.2,598.0 505.4,595.5 506.5,594.0 507.7,591.7 508.8,590.1 510.0,588.6 511.2,588.5 512.4,589.3 513.6,590.1 514.8,589.8 516.0,592.5 517.1,594.5 518.1,593.9 519.1,593.5 520.1,593.3 521.2,592.6 522.2,592.1 523.2,591.2 524.2,591.5 525.2,589.8 526.2,589.6 527.3,586.9 528.3,586.2 529.5,588.4 530.6,590.7 531.8,592.7 532.9,592.6 534.0,590.9 535.1,590.3 536.2,589.6 537.4,589.2 538.5,588.6 539.6,588.8 540.7,587.4 541.9,586.3 543.1,584.7 544.2,581.7 545.4,580.1 546.6,579.2 547.7,578.2 548.8,577.1 549.9,575.1 550.9,573.9 552.0,571.6 553.1,570.9 554.2,569.7 555.3,573.7 556.3,576.8 557.4,580.2 558.4,583.7 559.5,586.2 560.5,588.8 561.5,591.5 562.5,595.1 564.0,592.5 565.4,591.0 566.6,592.1" fill="none" stroke="#000" stroke-width="1.5" stroke-linejoin="miter"/></svg>
<svg style="left:0;top:0" width="1276" height="739"><polyline points="381.3,618.6 382.3,618.2 383.4,618.0 384.4,617.8 385.5,617.2 386.5,616.6 387.6,616.3 388.6,615.6 389.8,615.2 391.0,615.0 392.1,614.0 393.3,614.6 394.5,613.9 395.7,613.0 396.9,613.2 398.0,612.3 399.2,611.5 400.2,611.0 401.2,610.5 402.3,610.3 403.3,610.3 404.3,610.9 405.4,611.4 406.4,611.2 407.4,612.1 408.4,611.7 409.4,612.3 410.4,612.5 411.5,612.3 412.5,612.2 413.5,612.7 414.5,612.7 415.9,613.4 417.4,615.3 418.4,614.9 419.5,614.9 420.6,615.3 421.6,614.5 422.6,614.4 423.7,614.4 424.7,613.6 425.7,613.0 426.7,612.7 427.8,613.3 428.8,612.6 429.8,612.1 430.8,611.5 431.8,610.8 432.8,611.1 433.9,610.9 434.9,610.3 435.9,609.8 436.9,609.7 437.9,610.2 438.9,610.7 439.9,610.1 440.9,610.2 441.9,610.8 442.9,611.1 443.9,611.5 445.0,612.0 446.0,611.6 447.1,612.6 448.1,612.7 449.2,612.7 450.3,612.6 451.3,613.7 452.4,613.2 453.4,614.0 454.5,613.9 455.7,613.2 456.9,612.8 458.0,613.1 459.2,612.2 460.4,612.1 461.4,612.6 462.5,612.0 463.5,611.5 464.6,611.5 465.6,611.7 466.7,611.9 467.7,612.2 468.8,611.1 469.8,611.5 470.8,611.3 471.8,611.0 472.8,611.9 473.9,610.8 474.9,610.7 475.9,610.6 476.9,610.9 477.9,611.5 478.9,611.4 480.0,611.2 481.0,611.4 482.0,611.3 483.0,610.7 484.1,610.9 485.1,611.1 486.2,612.4 487.3,612.6 488.3,612.1 489.4,613.1 490.4,613.3 491.4,613.0 492.4,612.9 493.4,612.9 494.4,612.7 495.4,612.5 496.4,612.8 497.4,612.9 498.5,613.6 499.5,612.6 500.5,613.7 501.5,612.7 502.5,612.9 503.5,613.5 504.5,613.5 505.5,613.0 506.5,613.1 507.6,612.0 508.6,612.0 509.7,611.3 510.7,611.4 511.8,610.4 512.8,610.7 513.9,611.6 514.9,612.9 515.9,613.1 516.9,612.5 517.9,612.9 518.9,613.3 520.0,613.2 521.0,612.3 522.0,612.2 523.0,612.7 524.0,611.9 525.0,612.6 526.1,611.5 527.1,611.8 528.1,611.7 529.2,610.8 530.2,610.4 531.2,610.4 532.2,611.0 533.2,610.7 534.2,610.4 535.3,611.0 536.3,610.6 537.3,610.6 538.3,611.0 539.3,610.7 540.3,611.9 541.3,612.4 542.4,612.4 543.4,613.0 544.4,612.2 545.4,613.1 546.4,612.7 547.4,612.8 548.4,613.3 549.4,613.2 550.4,612.4 551.5,612.1 552.5,612.2 553.5,612.2 554.5,612.6 555.5,611.6 556.5,612.2 557.5,612.0 558.5,612.0 559.5,611.8 560.5,611.5 561.6,611.1 562.6,610.9 563.6,610.9 564.6,611.3 565.6,610.3 566.6,610.7" fill="none" stroke="#3458a8" stroke-width="1.3" stroke-linejoin="miter"/></svg>
<div class="a" style="left:697px;top:139px;width:550px;height:523px;background:#b3b3b3;border:1px solid #8a8a8a;box-shadow:inset 2px 2px 0 #fff,inset -1px -1px 0 #6e6e6e"></div>
<div class="a" style="left:703px;top:165px;width:540px;height:492px;background:#000"></div>
<svg style="left:0;top:0" width="1276" height="739"><rect x="705" y="147" width="11" height="12" fill="#000"/><path d="M706 158.5 L716 147.5" stroke="#c8c8c8" stroke-width="1.6" stroke-dasharray="1 0.6"/><path d="M728 147 V160 L721 153.5 Z M730 147 V160 L737 153.5 Z" fill="#000"/><path d="M748.5 146.5 L755 153 H742 Z M742 155 H755 L748.5 161.5 Z" fill="#000"/></svg>
<div class="t" style="left:777px;top:147.00px;font-size:13px;color:#1a0a1a;transform:scaleX(1.1292);">ticks: 1119</div>
<div class="a" style="left:1218.5px;top:143.5px;width:24px;height:20px;background:#b3b3b3;border-top:2px solid #fff;border-left:2px solid #fff;border-bottom:2px solid #777;border-right:2px solid #777;outline:1px solid #999"></div>
<div class="t" style="left:1225px;top:150.16px;font-size:9.5px;color:#1a0a2a;transform:scaleX(1.0296);">3D</div>
<div class="a" style="left:1256px;top:136px;width:16px;height:528px;background:#d8dbe0;border:1px solid #a8abb2"></div>
<div class="a" style="left:1257px;top:137px;width:14px;height:17px;background:linear-gradient(90deg,#f2f2f2,#dedede)"></div>
<div class="a" style="left:1256px;top:154px;width:16px;height:485px;background:#e2e3e6"></div>
<div class="a" style="left:1256px;top:154px;width:16px;height:485px;border:2px solid #1e3246;border-left:none;border-radius:0 15px 15px 0;background:linear-gradient(90deg,#c8d0d8,#f4f8fa 10%,#b2c8dc 30%,#c8dcec 60%,#e4f6fc 90%,#fff)"></div>
<div class="a" style="left:1257px;top:639px;width:14px;height:8px;background:linear-gradient(#b8b8b8,#e8e8e8)"></div>
<div class="a" style="left:1257px;top:647px;width:14px;height:16px;background:linear-gradient(90deg,#f2f2f2,#dedede)"></div>
<svg style="left:0;top:0" width="1276" height="739"><path d="M1263.5 142 L1267.5 149 H1259.5 Z M1259.5 652 H1267.5 L1263.5 659 Z" fill="#333"/></svg>
<div class="a" style="left:1272px;top:136px;width:3px;height:603px;background:#d6d9df"></div>
<div class="a" style="left:1275px;top:51px;width:1px;height:688px;background:#a4a29e"></div>
<div class="a" style="left:2px;top:676px;width:1272px;height:1px;background:#9ca0a8"></div>
<div class="a" style="left:2px;top:677px;width:1272px;height:26px;background:#bcbce6"></div>
<div class="t" style="left:4.4px;top:684.94px;font-size:13.3px;color:#140a14;font-weight:bold;transform:scaleX(1.0873);">Command Center</div>
<div class="a" style="left:1185px;top:683.5px;width:33px;height:16.5px;border-radius:5px;border:1px solid #5a5e66;background:linear-gradient(#fdfdfd,#dfe0e4)"></div>
<svg style="left:0;top:0" width="1276" height="739"><path d="M1197 696 L1206 687 M1201 687 H1206 V692 M1197 691 V696 H1202" fill="none" stroke="#000" stroke-width="2.2"/></svg>
<div class="a" style="left:1222px;top:681.5px;width:50px;height:19.5px;border-radius:6px;border:1px solid #5a5e66;background:linear-gradient(#fdfdfd,#dfe0e4)"></div>
<div class="t" style="left:1234.9px;top:684.87px;font-size:11.5px;color:#1a0a2a;transform:scaleX(0.9169);">Clear</div>
<div class="a" style="left:2px;top:703px;width:1272px;height:19px;background:#d6d9df"></div>
<div class="a" style="left:5px;top:705px;width:1267px;height:14px;background:#fff;border:1px solid #9a9ea6"></div>
<div class="a" style="left:1256px;top:706px;width:15px;height:12px;background:linear-gradient(#e8e8e8,#cfcfcf 50%,#eaeaea);border-left:1px solid #bbb"></div>
<div class="a" style="left:2px;top:721px;width:67px;height:18px;background:#bcbce6"></div>
<div class="t" style="left:4.6px;top:723.60px;font-size:13px;color:#111;transform:scaleX(1.0896);">observer></div>
<div class="a" style="left:69px;top:721px;width:1205px;height:18px;background:#d6d9df"></div>
<div class="a" style="left:71px;top:723px;width:162px;height:16px;background:#fff;border:1px solid #8a8e96;border-right:none;border-bottom:none"></div>
<div class="a" style="left:71px;top:723px;width:1162px;height:16px;background:#fff;border:1px solid #8a8e96;border-bottom:none"></div>
<div class="a" style="left:1237.5px;top:724px;width:34px;height:15px;border-radius:6px 6px 0 0;border:1px solid #b8bbc2;border-bottom:none;background:linear-gradient(#e6e8ec,#d6d9df)"></div>
<svg style="left:0;top:0" width="1276" height="739"><path d="M1249.8 728.8 H1259.2 L1254.5 734.2 Z" fill="#000"/></svg>
<svg style="left:703px;top:165px;overflow:hidden" width="540" height="492" viewBox="703 165 540 492"><defs><path id="tt" d="M0 -5.3 L4.03 3.67 L0 2.0 L-4.03 3.67 Z"/></defs><use href="#tt" fill="#3d6ac4" transform="translate(771.3 169.9) rotate(98)"/><use href="#tt" fill="#e0352b" transform="translate(780.8 169.5) rotate(0)"/><use href="#tt" fill="#3d6ac4" transform="translate(739.5 180.2) rotate(122)"/><use href="#tt" fill="#3d6ac4" transform="translate(788.5 185) rotate(85)"/><use href="#tt" fill="#3d6ac4" transform="translate(740.4 194.4) rotate(211)"/><use href="#tt" fill="#e0352b" transform="translate(737.5 206) rotate(299)"/><use href="#tt" fill="#e0352b" transform="translate(828.9 202.9) rotate(180)"/><use href="#tt" fill="#3d6ac4" transform="translate(776.0 212.8) rotate(261)"/><use href="#tt" fill="#3d6ac4" transform="translate(758.1 226.4) rotate(37)"/><use href="#tt" fill="#3d6ac4" transform="translate(793.6 226.9) rotate(270)"/><use href="#tt" fill="#e0352b" transform="translate(756.1 236.9) rotate(275)"/><use href="#tt" fill="#e0352b" transform="translate(759.3 246.3) rotate(320)"/><use href="#tt" fill="#3d6ac4" transform="translate(777.7 258.4) rotate(133)"/><use href="#tt" fill="#3d6ac4" transform="translate(842.7 213.2) rotate(290)"/><use href="#tt" fill="#3d6ac4" transform="translate(958.4 209) rotate(180)"/><use href="#tt" fill="#3d6ac4" transform="translate(874.5 254.9) rotate(358)"/><use href="#tt" fill="#3d6ac4" transform="translate(878.8 260.9) rotate(322)"/><use href="#tt" fill="#e0352b" transform="translate(863.9 268.2) rotate(109)"/><use href="#tt" fill="#e0352b" transform="translate(914.9 257.5) rotate(257)"/><use href="#tt" fill="#3d6ac4" transform="translate(901.2 279.8) rotate(285)"/><use href="#tt" fill="#3d6ac4" transform="translate(883.5 284.1) rotate(136)"/><use href="#tt" fill="#e0352b" transform="translate(991.5 166) rotate(180)"/><use href="#tt" fill="#3d6ac4" transform="translate(1059.3 168.2) rotate(200)"/><use href="#tt" fill="#e0352b" transform="translate(1038.7 181.6) rotate(141)"/><use href="#tt" fill="#e0352b" transform="translate(1103.2 181.6) rotate(127)"/><use href="#tt" fill="#3d6ac4" transform="translate(1078.2 216.3) rotate(111)"/><use href="#tt" fill="#e0352b" transform="translate(1104.9 231.4) rotate(103)"/><use href="#tt" fill="#3d6ac4" transform="translate(1121.3 168.2) rotate(45)"/><use href="#tt" fill="#3d6ac4" transform="translate(1171.2 194.8) rotate(91)"/><use href="#tt" fill="#3d6ac4" transform="translate(1184.9 194.8) rotate(178)"/><use href="#tt" fill="#3d6ac4" transform="translate(1143.1 200.5) rotate(232)"/><use href="#tt" fill="#e0352b" transform="translate(1177.2 214.5) rotate(226)"/><use href="#tt" fill="#e0352b" transform="translate(1238.7 213.7) rotate(16)"/><use href="#tt" fill="#3d6ac4" transform="translate(1141.9 235.2) rotate(312)"/><use href="#tt" fill="#3d6ac4" transform="translate(1170 236.5) rotate(123)"/><use href="#tt" fill="#3d6ac4" transform="translate(1207.7 228.3) rotate(198)"/><use href="#tt" fill="#3d6ac4" transform="translate(1218.4 234.3) rotate(222)"/><use href="#tt" fill="#3d6ac4" transform="translate(1216.7 244.6) rotate(216)"/><use href="#tt" fill="#3d6ac4" transform="translate(1113.6 261.3) rotate(254)"/><use href="#tt" fill="#3d6ac4" transform="translate(1226.1 264) rotate(102)"/><use href="#tt" fill="#3d6ac4" transform="translate(1166 277.3) rotate(264)"/><use href="#tt" fill="#3d6ac4" transform="translate(724.1 300.5) rotate(249)"/><use href="#tt" fill="#e0352b" transform="translate(758.4 315.1) rotate(326)"/><use href="#tt" fill="#e0352b" transform="translate(782.5 312.1) rotate(336)"/><use href="#tt" fill="#3d6ac4" transform="translate(795.9 312.8) rotate(3)"/><use href="#tt" fill="#3d6ac4" transform="translate(798.3 300.8) rotate(156)"/><use href="#tt" fill="#3d6ac4" transform="translate(808.6 290.5) rotate(157)"/><use href="#tt" fill="#3d6ac4" transform="translate(824.1 316.8) rotate(84)"/><use href="#tt" fill="#3d6ac4" transform="translate(813.4 346.9) rotate(233)"/><use href="#tt" fill="#3d6ac4" transform="translate(784.2 361) rotate(70)"/><use href="#tt" fill="#3d6ac4" transform="translate(815.1 376.1) rotate(32)"/><use href="#tt" fill="#3d6ac4" transform="translate(745 391.9) rotate(274)"/><use href="#tt" fill="#3d6ac4" transform="translate(778.2 403.6) rotate(350)"/><use href="#tt" fill="#3d6ac4" transform="translate(782.1 404) rotate(20)"/><use href="#tt" fill="#3d6ac4" transform="translate(934.7 303.9) rotate(3)"/><use href="#tt" fill="#e0352b" transform="translate(847.4 333.5) rotate(181)"/><use href="#tt" fill="#3d6ac4" transform="translate(853 331) rotate(102)"/><use href="#tt" fill="#e0352b" transform="translate(870.2 377.8) rotate(299)"/><use href="#tt" fill="#3d6ac4" transform="translate(878.8 377.8) rotate(135)"/><use href="#tt" fill="#3d6ac4" transform="translate(851.3 391.2) rotate(35)"/><use href="#tt" fill="#3d6ac4" transform="translate(952.7 402.7) rotate(196)"/><use href="#tt" fill="#e0352b" transform="translate(1050.8 289.3) rotate(45)"/><use href="#tt" fill="#3d6ac4" transform="translate(1097.1 289.3) rotate(315)"/><use href="#tt" fill="#3d6ac4" transform="translate(1004 328.8) rotate(293)"/><use href="#tt" fill="#3d6ac4" transform="translate(994.4 336.2) rotate(305)"/><use href="#tt" fill="#e0352b" transform="translate(1043 348.2) rotate(287)"/><use href="#tt" fill="#e0352b" transform="translate(1031.5 355.8) rotate(316)"/><use href="#tt" fill="#3d6ac4" transform="translate(1078.6 353.4) rotate(33)"/><use href="#tt" fill="#e0352b" transform="translate(976.9 374) rotate(186)"/><use href="#tt" fill="#e0352b" transform="translate(992 392.9) rotate(181)"/><use href="#tt" fill="#3d6ac4" transform="translate(1019 389.5) rotate(195)"/><use href="#tt" fill="#3d6ac4" transform="translate(1051.6 403.6) rotate(318)"/><use href="#tt" fill="#e0352b" transform="translate(1220.5 293.2) rotate(300)"/><use href="#tt" fill="#e0352b" transform="translate(1122.5 309.1) rotate(357)"/><use href="#tt" fill="#e0352b" transform="translate(1110.2 327.6) rotate(156)"/><use href="#tt" fill="#e0352b" transform="translate(1146.2 328) rotate(90)"/><use href="#tt" fill="#e0352b" transform="translate(1121.3 339.6) rotate(7)"/><use href="#tt" fill="#e0352b" transform="translate(1226.1 375.2) rotate(277)"/><use href="#tt" fill="#3d6ac4" transform="translate(1175.8 389) rotate(341)"/><use href="#tt" fill="#3d6ac4" transform="translate(814.3 418.2) rotate(151)"/><use href="#tt" fill="#3d6ac4" transform="translate(818.9 433.6) rotate(354)"/><use href="#tt" fill="#e0352b" transform="translate(738.1 433.6) rotate(231)"/><use href="#tt" fill="#3d6ac4" transform="translate(726.6 453) rotate(271)"/><use href="#tt" fill="#3d6ac4" transform="translate(775.6 462.8) rotate(108)"/><use href="#tt" fill="#3d6ac4" transform="translate(767.4 470.6) rotate(136)"/><use href="#tt" fill="#e0352b" transform="translate(782.5 472.3) rotate(309)"/><use href="#tt" fill="#e0352b" transform="translate(728.4 474.9) rotate(209)"/><use href="#tt" fill="#3d6ac4" transform="translate(737.8 474.9) rotate(274)"/><use href="#tt" fill="#3d6ac4" transform="translate(774.2 495.5) rotate(150)"/><use href="#tt" fill="#e0352b" transform="translate(802.7 513.2) rotate(175)"/><use href="#tt" fill="#e0352b" transform="translate(834.4 508.4) rotate(219)"/><use href="#tt" fill="#e0352b" transform="translate(775.6 521.8) rotate(25)"/><use href="#tt" fill="#3d6ac4" transform="translate(823.4 526.4) rotate(307)"/><use href="#tt" fill="#3d6ac4" transform="translate(879.3 432.8) rotate(55)"/><use href="#tt" fill="#3d6ac4" transform="translate(932.6 481.2) rotate(108)"/><use href="#tt" fill="#e0352b" transform="translate(943.2 503.2) rotate(336)"/><use href="#tt" fill="#e0352b" transform="translate(867.6 511.5) rotate(107)"/><use href="#tt" fill="#e0352b" transform="translate(884.5 517.8) rotate(166)"/><use href="#tt" fill="#e0352b" transform="translate(1003 425.6) rotate(27)"/><use href="#tt" fill="#e0352b" transform="translate(1006.4 432.8) rotate(219)"/><use href="#tt" fill="#3d6ac4" transform="translate(996.1 449.1) rotate(147)"/><use href="#tt" fill="#3d6ac4" transform="translate(1089.9 432.8) rotate(164)"/><use href="#tt" fill="#3d6ac4" transform="translate(1106.1 435.4) rotate(86)"/><use href="#tt" fill="#e0352b" transform="translate(1094.1 453) rotate(300)"/><use href="#tt" fill="#e0352b" transform="translate(1075.2 482.6) rotate(257)"/><use href="#tt" fill="#e0352b" transform="translate(1199.8 419.9) rotate(5)"/><use href="#tt" fill="#3d6ac4" transform="translate(1111.9 452.5) rotate(102)"/><use href="#tt" fill="#e0352b" transform="translate(1112.7 476.6) rotate(108)"/><use href="#tt" fill="#e0352b" transform="translate(1143.1 485.2) rotate(75)"/><use href="#tt" fill="#3d6ac4" transform="translate(1128.2 507.5) rotate(80)"/><use href="#tt" fill="#e0352b" transform="translate(1215.8 504.9) rotate(271)"/><use href="#tt" fill="#e0352b" transform="translate(1215 520.4) rotate(163)"/><use href="#tt" fill="#e0352b" transform="translate(792.3 547.6) rotate(17)"/><use href="#tt" fill="#3d6ac4" transform="translate(741.3 560.2) rotate(211)"/><use href="#tt" fill="#3d6ac4" transform="translate(774.7 558.1) rotate(77)"/><use href="#tt" fill="#e0352b" transform="translate(753.6 578.4) rotate(10)"/><use href="#tt" fill="#3d6ac4" transform="translate(715.8 583.6) rotate(38)"/><use href="#tt" fill="#e0352b" transform="translate(744 595.4) rotate(242)"/><use href="#tt" fill="#3d6ac4" transform="translate(780 593.7) rotate(310)"/><use href="#tt" fill="#e0352b" transform="translate(829.3 582.8) rotate(85)"/><use href="#tt" fill="#3d6ac4" transform="translate(749.2 614.1) rotate(195)"/><use href="#tt" fill="#3d6ac4" transform="translate(761.9 650) rotate(309)"/><use href="#tt" fill="#3d6ac4" transform="translate(824.9 648.2) rotate(209)"/><use href="#tt" fill="#e0352b" transform="translate(780.5 661.3) rotate(0)"/><use href="#tt" fill="#3d6ac4" transform="translate(879.8 532.5) rotate(136)"/><use href="#tt" fill="#3d6ac4" transform="translate(905.3 532.6) rotate(85)"/><use href="#tt" fill="#3d6ac4" transform="translate(861.7 540.2) rotate(274)"/><use href="#tt" fill="#3d6ac4" transform="translate(880.4 567.8) rotate(20)"/><use href="#tt" fill="#e0352b" transform="translate(909.7 578.9) rotate(162)"/><use href="#tt" fill="#3d6ac4" transform="translate(875.5 620.6) rotate(160)"/><use href="#tt" fill="#e0352b" transform="translate(945.8 620) rotate(65)"/><use href="#tt" fill="#3d6ac4" transform="translate(958.1 634.6) rotate(357)"/><use href="#tt" fill="#e0352b" transform="translate(912.4 648.2) rotate(308)"/><use href="#tt" fill="#3d6ac4" transform="translate(860.5 652.8) rotate(89)"/><use href="#tt" fill="#3d6ac4" transform="translate(987.2 570.1) rotate(93)"/><use href="#tt" fill="#e0352b" transform="translate(1064.1 567.8) rotate(15)"/><use href="#tt" fill="#3d6ac4" transform="translate(1023.1 594.2) rotate(306)"/><use href="#tt" fill="#3d6ac4" transform="translate(1037.2 597.2) rotate(247)"/><use href="#tt" fill="#e0352b" transform="translate(1046 606) rotate(290)"/><use href="#tt" fill="#3d6ac4" transform="translate(1084 600) rotate(277)"/><use href="#tt" fill="#e0352b" transform="translate(1077.6 608.8) rotate(177)"/><use href="#tt" fill="#3d6ac4" transform="translate(1073.8 615.8) rotate(217)"/><use href="#tt" fill="#3d6ac4" transform="translate(1095.2 608.8) rotate(101)"/><use href="#tt" fill="#e0352b" transform="translate(1051.8 619.7) rotate(353)"/><use href="#tt" fill="#e0352b" transform="translate(1010.1 623.2) rotate(238)"/><use href="#tt" fill="#3d6ac4" transform="translate(1105.4 648.2) rotate(314)"/><use href="#tt" fill="#e0352b" transform="translate(992 659) rotate(180)"/><use href="#tt" fill="#3d6ac4" transform="translate(1160.9 533.2) rotate(265)"/><use href="#tt" fill="#3d6ac4" transform="translate(1171.8 545.8) rotate(267)"/><use href="#tt" fill="#3d6ac4" transform="translate(1236 543.2) rotate(303)"/><use href="#tt" fill="#e0352b" transform="translate(1207 559.5) rotate(219)"/><use href="#tt" fill="#3d6ac4" transform="translate(1221.1 572.2) rotate(226)"/><use href="#tt" fill="#3d6ac4" transform="translate(1166.9 596.5) rotate(342)"/><use href="#tt" fill="#3d6ac4" transform="translate(1168.7 603.5) rotate(122)"/><use href="#tt" fill="#e0352b" transform="translate(1214.4 601.8) rotate(157)"/><use href="#tt" fill="#3d6ac4" transform="translate(1175.3 620) rotate(87)"/><use href="#tt" fill="#e0352b" transform="translate(1139.3 627.1) rotate(296)"/><use href="#tt" fill="#3d6ac4" transform="translate(1141.6 641.7) rotate(307)"/><use href="#tt" fill="#3d6ac4" transform="translate(1159.2 641.7) rotate(185)"/><use href="#tt" fill="#3d6ac4" transform="translate(1236 637.3) rotate(132)"/><use href="#tt" fill="#3d6ac4" transform="translate(1120.5 657) rotate(180)"/></svg>
<svg style="left:0;top:0" width="1276" height="739"><path d="M916.3 280 L916.6 292.6 L919.4 289.8 L921.8 295.2 L923.7 294.4 L921.4 289 L925.2 288.8 Z" fill="#f0f0f0" stroke="#333" stroke-width="0.6"/></svg>
</body></html>
